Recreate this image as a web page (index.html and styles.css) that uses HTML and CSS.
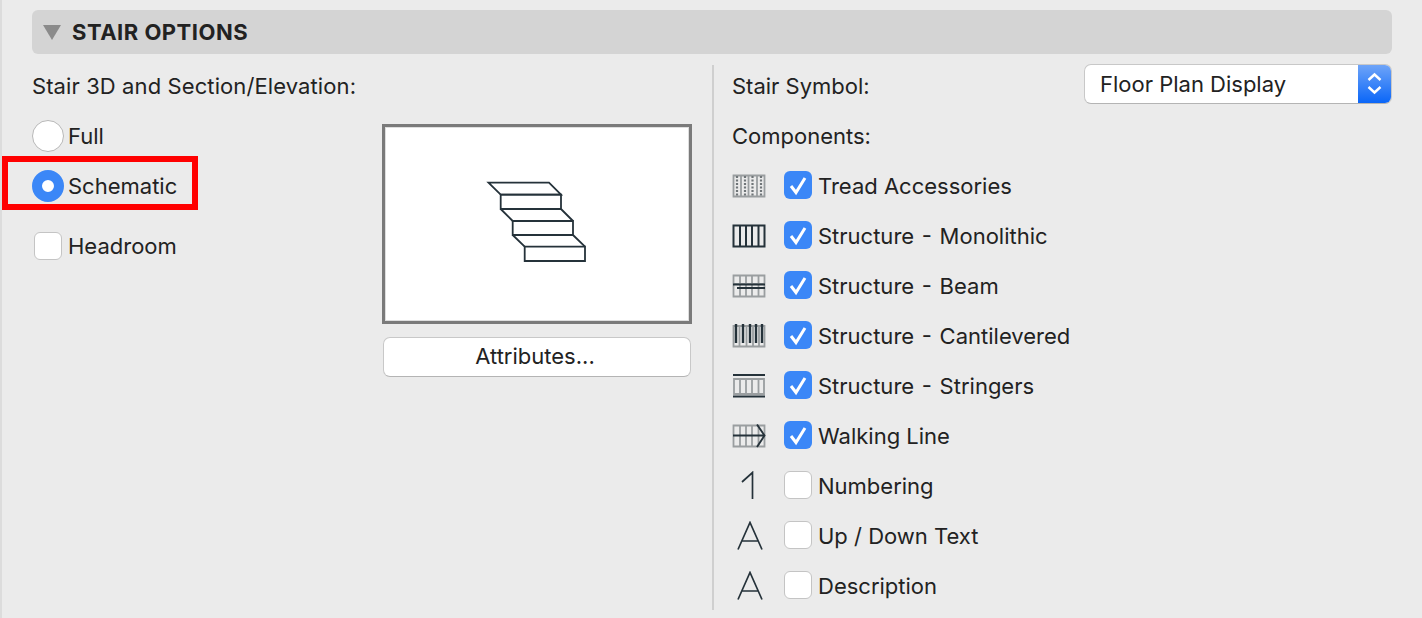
FILE: index.html
```html
<!DOCTYPE html>
<html>
	<head>
		<meta charset="utf-8">
		<meta name="viewport" content="width=device-width, initial-scale=1">
		<link rel="stylesheet" href="styles.css">
		<title>Stair Options</title>
	</head>
	<body>
		<div class="panel">
			<div class="head">
				<span class="tri"></span>
				<span class="head-title">STAIR OPTIONS</span>
			</div>
			<div class="cols">
				<div class="left">
					<div class="left-title">Stair 3D and Section/Elevation:</div>
					<div class="left-body">
						<div class="opts">
							<div class="opt"><span class="radio"></span><span>Full</span></div>
							<div class="opt opt-mark"><span class="radio on"></span><span>Schematic</span><span class="mark"></span></div>
							<div class="opt opt-head"><span class="box"></span><span>Headroom</span></div>
						</div>
						<div class="prev">
							<div class="pic">
								<svg width="304" height="194" viewBox="385 127 304 194">
									<g fill="none" stroke="#25323a" stroke-width="1.8">
										<path d="M488.5 182.7H549L561 194.7H500.7Z"/>
										<path d="M500.7 194.7H561V209H500.7Z"/>
										<path d="M500.7 209L512.7 221M561 209L573 221"/>
										<path d="M512.7 221H573V235H512.7Z"/>
										<path d="M512.7 235L524.7 246.7M573 235L585 246.7"/>
										<path d="M524.7 246.7H585V261H524.7Z"/>
									</g>
								</svg>
							</div>
							<div class="btn">Attributes...</div>
						</div>
					</div>
				</div>
				<div class="right">
					<div class="sym">
						<span>Stair Symbol:</span>
						<div class="sel">
							<span class="sel-text">Floor Plan Display</span>
							<span class="step">
								<svg width="33" height="39" viewBox="0 0 33 39">
									<path d="M10.5 16L16.500 10.500L22.500 16M10.500 23L16.500 28.500L22.500 23" fill="none" stroke="#fff" stroke-width="2.400"/>
								</svg>
							</span>
						</div>
					</div>
					<div class="comp-title">Components:</div>
					<div class="row">
						<svg class="ico" width="34" height="26" viewBox="0 0 34 26">
							<path d="M1.500 3.500H32.500V24.500H1.500ZM9 3.500V24.500M16.500 3.500V24.500M25 3.500V24.500" fill="none" stroke="#9a9ea0" stroke-width="1.800"/>
							<path d="M5 4V24M13 4V24M20.500 4V24M29 4V24" fill="none" stroke="#6f7578" stroke-width="2.200" stroke-dasharray="2 1.500"/>
						</svg>
						<span class="box on"><svg width="28" height="28" viewBox="0 0 28 28"><path d="M7 15L12 21.500L21 7" fill="none" stroke="#fff" stroke-width="3"/></svg></span>
						<span>Tread Accessories</span>
					</div>
					<div class="row">
						<svg class="ico" width="34" height="26" viewBox="0 0 34 26">
							<path d="M1.500 3.500H32.500V24.500H1.500ZM8 3.500V24.500M14 3.500V24.500M20 3.500V24.500M26.500 3.500V24.500" fill="none" stroke="#25323a" stroke-width="2"/>
						</svg>
						<span class="box on"><svg width="28" height="28" viewBox="0 0 28 28"><path d="M7 15L12 21.500L21 7" fill="none" stroke="#fff" stroke-width="3"/></svg></span>
						<span class="st">Structure - Monolithic</span>
					</div>
					<div class="row">
						<svg class="ico" width="34" height="26" viewBox="0 0 34 26">
							<path d="M1.500 3.500H32.500V24.500H1.500ZM8 3.500V24.500M14 3.500V24.500M20 3.500V24.500M26.500 3.500V24.500M1.500 12H32.500" fill="none" stroke="#9a9ea0" stroke-width="1.800"/>
							<path d="M1 12.500H33M5 16H33" fill="none" stroke="#25323a" stroke-width="1.800"/>
						</svg>
						<span class="box on"><svg width="28" height="28" viewBox="0 0 28 28"><path d="M7 15L12 21.500L21 7" fill="none" stroke="#fff" stroke-width="3"/></svg></span>
						<span class="st">Structure - Beam</span>
					</div>
					<div class="row">
						<svg class="ico" width="34" height="26" viewBox="0 0 34 26">
							<path d="M1.500 4H32.500V24.500H1.500ZM7.500 4V24.500M14.500 4V24.500M21 4V24.500M27 4V24.500" fill="none" stroke="#9a9ea0" stroke-width="1.800"/>
							<path d="M4 2V21M11 2V21M18 2V21M24 2V21M30 2V21" fill="none" stroke="#25323a" stroke-width="2.400"/>
						</svg>
						<span class="box on"><svg width="28" height="28" viewBox="0 0 28 28"><path d="M7 15L12 21.500L21 7" fill="none" stroke="#fff" stroke-width="3"/></svg></span>
						<span class="st">Structure - Cantilevered</span>
					</div>
					<div class="row">
						<svg class="ico" width="34" height="26" viewBox="0 0 34 26">
							<path d="M2 7H32V22H2ZM8 7V22M14 7V22M20 7V22M26.500 7V22" fill="none" stroke="#9a9ea0" stroke-width="1.800"/>
							<path d="M1 3H33M1 24.500H33" fill="none" stroke="#25323a" stroke-width="2"/>
						</svg>
						<span class="box on"><svg width="28" height="28" viewBox="0 0 28 28"><path d="M7 15L12 21.500L21 7" fill="none" stroke="#fff" stroke-width="3"/></svg></span>
						<span class="st">Structure - Stringers</span>
					</div>
					<div class="row">
						<svg class="ico" width="34" height="26" viewBox="0 0 34 26">
							<path d="M1.500 3.500H32.500V24.500H1.500ZM8 3.500V24.500M14 3.500V24.500M20 3.500V24.500M26.500 3.500V24.500" fill="none" stroke="#9a9ea0" stroke-width="1.800"/>
							<path d="M1 13.500H32M25 2.500L32.500 13.500L25 25" fill="none" stroke="#25323a" stroke-width="1.900"/>
						</svg>
						<span class="box on"><svg width="28" height="28" viewBox="0 0 28 28"><path d="M7 15L12 21.500L21 7" fill="none" stroke="#fff" stroke-width="3"/></svg></span>
						<span>Walking Line</span>
					</div>
					<div class="row">
						<svg class="ico ico-txt" width="34" height="30" viewBox="0 0 34 30">
							<path d="M10 11L20.500 1.500V28" fill="none" stroke="#25323a" stroke-width="1.700"/>
						</svg>
						<span class="box"></span>
						<span>Numbering</span>
					</div>
					<div class="row">
						<svg class="ico ico-txt" width="34" height="30" viewBox="0 0 34 30">
							<path d="M6 28.500L18 1.500L30 28.500M9.500 20H26.500" fill="none" stroke="#25323a" stroke-width="1.700"/>
						</svg>
						<span class="box"></span>
						<span>Up / Down Text</span>
					</div>
					<div class="row">
						<svg class="ico ico-txt" width="34" height="30" viewBox="0 0 34 30">
							<path d="M6 28.500L18 1.500L30 28.500M9.500 20H26.500" fill="none" stroke="#25323a" stroke-width="1.700"/>
						</svg>
						<span class="box"></span>
						<span>Description</span>
					</div>
				</div>
			</div>
		</div>
	</body>
</html>
```

FILE: styles.css
```css
html, body {
	margin: 0;
	height: 100%;
	overflow: hidden;
}
body {
	background: #ebebeb;
	color: #222;
	font-family: "Inter", "Liberation Sans", sans-serif;
	font-size: 22px;
	border-left: 2px solid #dcdcdc;
	box-sizing: border-box;
}
.panel {
	padding: 10px 30px 0 30px;
}
.head {
	display: flex;
	align-items: center;
	height: 44px;
	background: #d4d4d4;
	border-radius: 6px;
}
.tri {
	width: 0;
	height: 0;
	margin-left: 11px;
	border-left: 9px solid transparent;
	border-right: 9px solid transparent;
	border-top: 15px solid #8b8b8b;
}
.head-title {
	margin-left: 11px;
	font-weight: 700;
	letter-spacing: 0.5px;
}
.cols {
	display: flex;
	margin-top: 11px;
}
.left {
	width: 680px;
	height: 545px;
	border-right: 2px solid #cfcfcf;
}
.left-title {
	height: 42px;
	line-height: 42px;
	letter-spacing: 0.1px;
}
.left-body {
	display: flex;
}
.opts {
	width: 350px;
	padding-top: 4px;
}
.opt {
	position: relative;
	display: flex;
	align-items: center;
	height: 50px;
	gap: 4px;
}
.opt-head {
	margin-top: 10px;
}
.radio {
	width: 32px;
	height: 32px;
	border-radius: 50%;
	background: #fff;
	border: 1px solid #b8b8b8;
	box-sizing: border-box;
}
.radio.on {
	border: 10px solid #3b87f7;
	background: #fff;
}
.mark {
	position: absolute;
	left: -30px;
	top: -5px;
	width: 196px;
	height: 54px;
	border: 6px solid #f00;
	box-sizing: border-box;
}
.box {
	display: block;
	flex: none;
	width: 28px;
	height: 28px;
	border-radius: 6px;
	background: #fff;
	border: 1px solid #c4c4c4;
	box-sizing: border-box;
}
.box.on {
	background: #3b87f7;
	border: 0;
}
.box svg {
	display: block;
}
.opt-head .box {
	margin: 0 2px 0 2px;
}
.prev {
	width: 310px;
	margin-top: 17px;
}
.pic {
	width: 310px;
	height: 200px;
	background: #fff;
	border: 3px solid #7a7a7a;
	outline: 1px solid #dedede;
	outline-offset: -4px;
	box-sizing: border-box;
}
.pic svg {
	display: block;
}
.btn {
	margin: 13px 1px 0 1px;
	height: 40px;
	line-height: 37px;
	padding-right: 4px;
	text-align: center;
	background: #fff;
	border-radius: 7px;
	border: 1px solid #c8c8c8;
	border-bottom-color: #b4b4b4;
	box-sizing: border-box;
}
.right {
	flex: 1;
	padding-left: 18px;
}
.sym {
	display: flex;
	justify-content: space-between;
	align-items: center;
	height: 42px;
}
.sel {
	display: flex;
	width: 308px;
	height: 40px;
	margin-top: -5px;
	background: #fff;
	border-radius: 7px;
	border: 1px solid #c8c8c8;
	border-bottom-color: #b4b4b4;
	box-sizing: border-box;
	overflow: hidden;
}
.sel-text {
	flex: 1;
	padding-left: 15px;
	line-height: 38px;
}
.step {
	width: 33px;
	background: linear-gradient(#6ea4f8, #0a66f8);
}
.step svg {
	display: block;
	margin-top: -1px;
}
.comp-title {
	height: 50px;
	line-height: 58px;
	margin-bottom: 4px;
}
.row {
	display: flex;
	align-items: center;
	height: 50px;
}
.st {
	word-spacing: 1.5px;
}
.ico {
	flex: none;
	margin: -2px 18px 0 0;
}
.ico-txt {
	margin-top: 0;
}
.row .box {
	margin: -2px 6px 0 0;
}
```
